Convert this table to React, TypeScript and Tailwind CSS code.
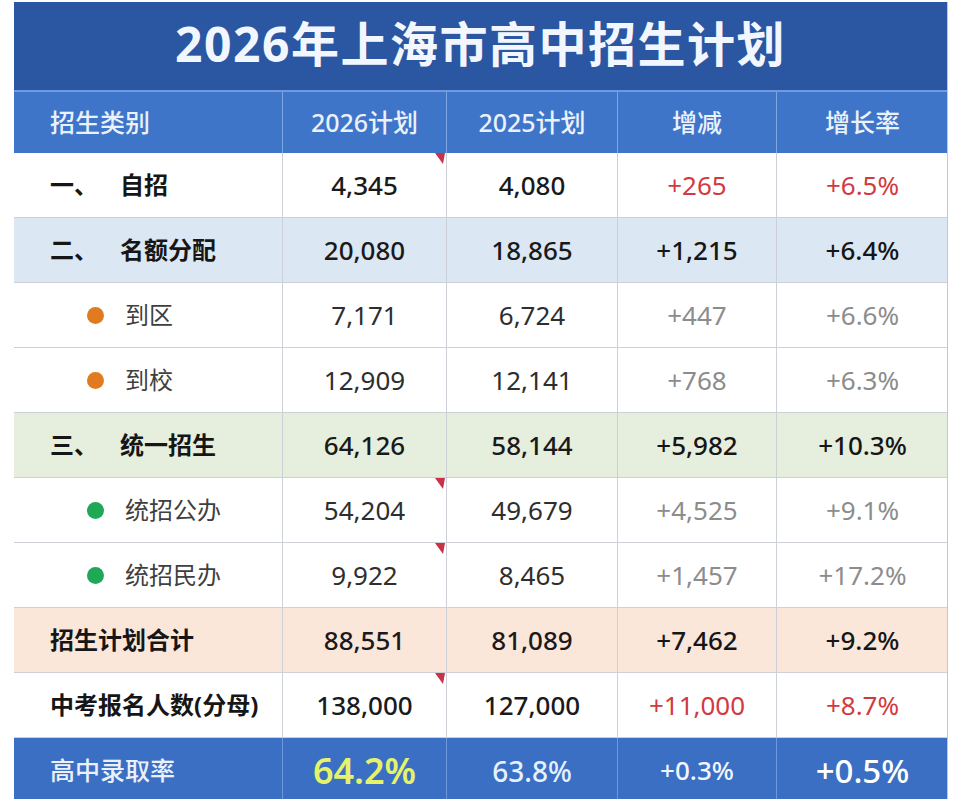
import React from 'react'

type Row = {
  prefix?: string
  label: string
  kind: 'main' | 'sub'
  dot?: string
  bg: string
  cells: [string, string, string, string]
  change: 'red' | 'black' | 'gray'
  mark?: boolean
}

const rows: Row[] = [
  { prefix: '一、', label: '自招', kind: 'main', bg: 'bg-white', cells: ['4,345', '4,080', '+265', '+6.5%'], change: 'red', mark: true },
  { prefix: '二、', label: '名额分配', kind: 'main', bg: 'bg-[#dce7f4]', cells: ['20,080', '18,865', '+1,215', '+6.4%'], change: 'black' },
  { label: '到区', kind: 'sub', dot: 'bg-[#e07b1f]', bg: 'bg-white', cells: ['7,171', '6,724', '+447', '+6.6%'], change: 'gray' },
  { label: '到校', kind: 'sub', dot: 'bg-[#e07b1f]', bg: 'bg-white', cells: ['12,909', '12,141', '+768', '+6.3%'], change: 'gray' },
  { prefix: '三、', label: '统一招生', kind: 'main', bg: 'bg-[#e6eede]', cells: ['64,126', '58,144', '+5,982', '+10.3%'], change: 'black' },
  { label: '统招公办', kind: 'sub', dot: 'bg-[#1fa855]', bg: 'bg-white', cells: ['54,204', '49,679', '+4,525', '+9.1%'], change: 'gray', mark: true },
  { label: '统招民办', kind: 'sub', dot: 'bg-[#1fa855]', bg: 'bg-white', cells: ['9,922', '8,465', '+1,457', '+17.2%'], change: 'gray', mark: true },
  { label: '招生计划合计', kind: 'main', bg: 'bg-[#fbe6da]', cells: ['88,551', '81,089', '+7,462', '+9.2%'], change: 'black' },
  { label: '中考报名人数(分母)', kind: 'main', bg: 'bg-white', cells: ['138,000', '127,000', '+11,000', '+8.7%'], change: 'red', mark: true },
]

const grid = 'grid grid-cols-[269px_164px_171px_159px_171px]'

const changeColor = {
  red: 'text-[#d23a40] font-normal',
  black: 'text-[#161616] font-medium',
  gray: 'text-[#8c8c8c] font-normal',
}

// little red comment flag in the top-right corner of a cell
function Mark() {
  return (
    <span className="absolute right-[1px] top-0 h-[11px] w-[10px] bg-[#c8334a] [clip-path:polygon(0_0,100%_0,80%_100%)]" />
  )
}

function BodyRow({ row }: { row: Row }) {
  const main = row.kind === 'main'
  const numCls = main ? 'font-medium text-[#1a1a1a]' : 'font-normal text-[#2e2e2e]'
  return (
    <div className={`${grid} h-[65px] border-b border-[#cdd1d7] ${row.bg}`}>
      <div className="flex items-center border-r border-[#cdd1d7] pl-[36px]">
        {main ? (
          <div className="flex items-center text-[24px] font-bold text-[#161616]">
            {row.prefix && <span className="w-[70px]">{row.prefix}</span>}
            <span>{row.label}</span>
          </div>
        ) : (
          <div className="flex items-center pl-[37px] text-[24px] text-[#3f3f3f]">
            <span className={`h-[17px] w-[17px] rounded-full ${row.dot}`} />
            <span className="ml-[21px]">{row.label}</span>
          </div>
        )}
      </div>
      <div className={`relative flex items-center justify-center border-r border-[#cdd1d7] text-[26px] ${numCls}`}>
        {row.cells[0]}
        {row.mark && <Mark />}
      </div>
      <div className={`flex items-center justify-center border-r border-[#cdd1d7] text-[26px] ${numCls}`}>
        {row.cells[1]}
      </div>
      <div className={`flex items-center justify-center border-r border-[#cdd1d7] text-[26px] ${changeColor[row.change]}`}>
        {row.cells[2]}
      </div>
      <div className={`flex items-center justify-center text-[26px] ${changeColor[row.change]}`}>
        {row.cells[3]}
      </div>
    </div>
  )
}

export default function App() {
  return (
    <div
      className="h-[799px] w-[960px] overflow-hidden bg-white pt-[2px]"
      style={{ fontFamily: '"Noto Sans", "Noto Sans CJK SC", sans-serif' }}
    >
      <div className="ml-[14px] w-[934px] border-r border-[#c4c8ce]">
        <div className="flex h-[88px] items-center justify-center bg-[#2a56a2] pb-[4px] text-[48px] font-bold tracking-[1.5px] text-[#f2f7ff]">
          2026年上海市高中招生计划
        </div>
        <div className={`${grid} h-[63px] border-t-2 border-[#6f9ae0] bg-[#3f75c8] text-[25px] font-medium text-[#eaf1fb]`}>
          <div className="flex items-center border-r border-[#7ea6e2] pl-[36px]">招生类别</div>
          <div className="flex items-center justify-center border-r border-[#7ea6e2]">2026计划</div>
          <div className="flex items-center justify-center border-r border-[#7ea6e2]">2025计划</div>
          <div className="flex items-center justify-center border-r border-[#7ea6e2]">增减</div>
          <div className="flex items-center justify-center">增长率</div>
        </div>
        {rows.map((r) => (
          <BodyRow key={r.label} row={r} />
        ))}
        <div className={`${grid} h-[65px] bg-[#3b6fc3]`}>
          <div className="flex items-center border-r border-[#6f98da] pl-[36px] text-[25px] font-medium text-[#eaf1fb]">
            高中录取率
          </div>
          <div className="flex items-center justify-center border-r border-[#6f98da] text-[36px] font-semibold text-[#e4f36a]">
            64.2%
          </div>
          <div className="flex items-center justify-center border-r border-[#6f98da] text-[28px] font-medium text-[#e6f1ff]">
            63.8%
          </div>
          <div className="flex items-center justify-center border-r border-[#6f98da] text-[26px] font-medium text-[#f2f6ff]">
            +0.3%
          </div>
          <div className="flex items-center justify-center text-[33px] font-medium text-white">+0.5%</div>
        </div>
      </div>
    </div>
  )
}
